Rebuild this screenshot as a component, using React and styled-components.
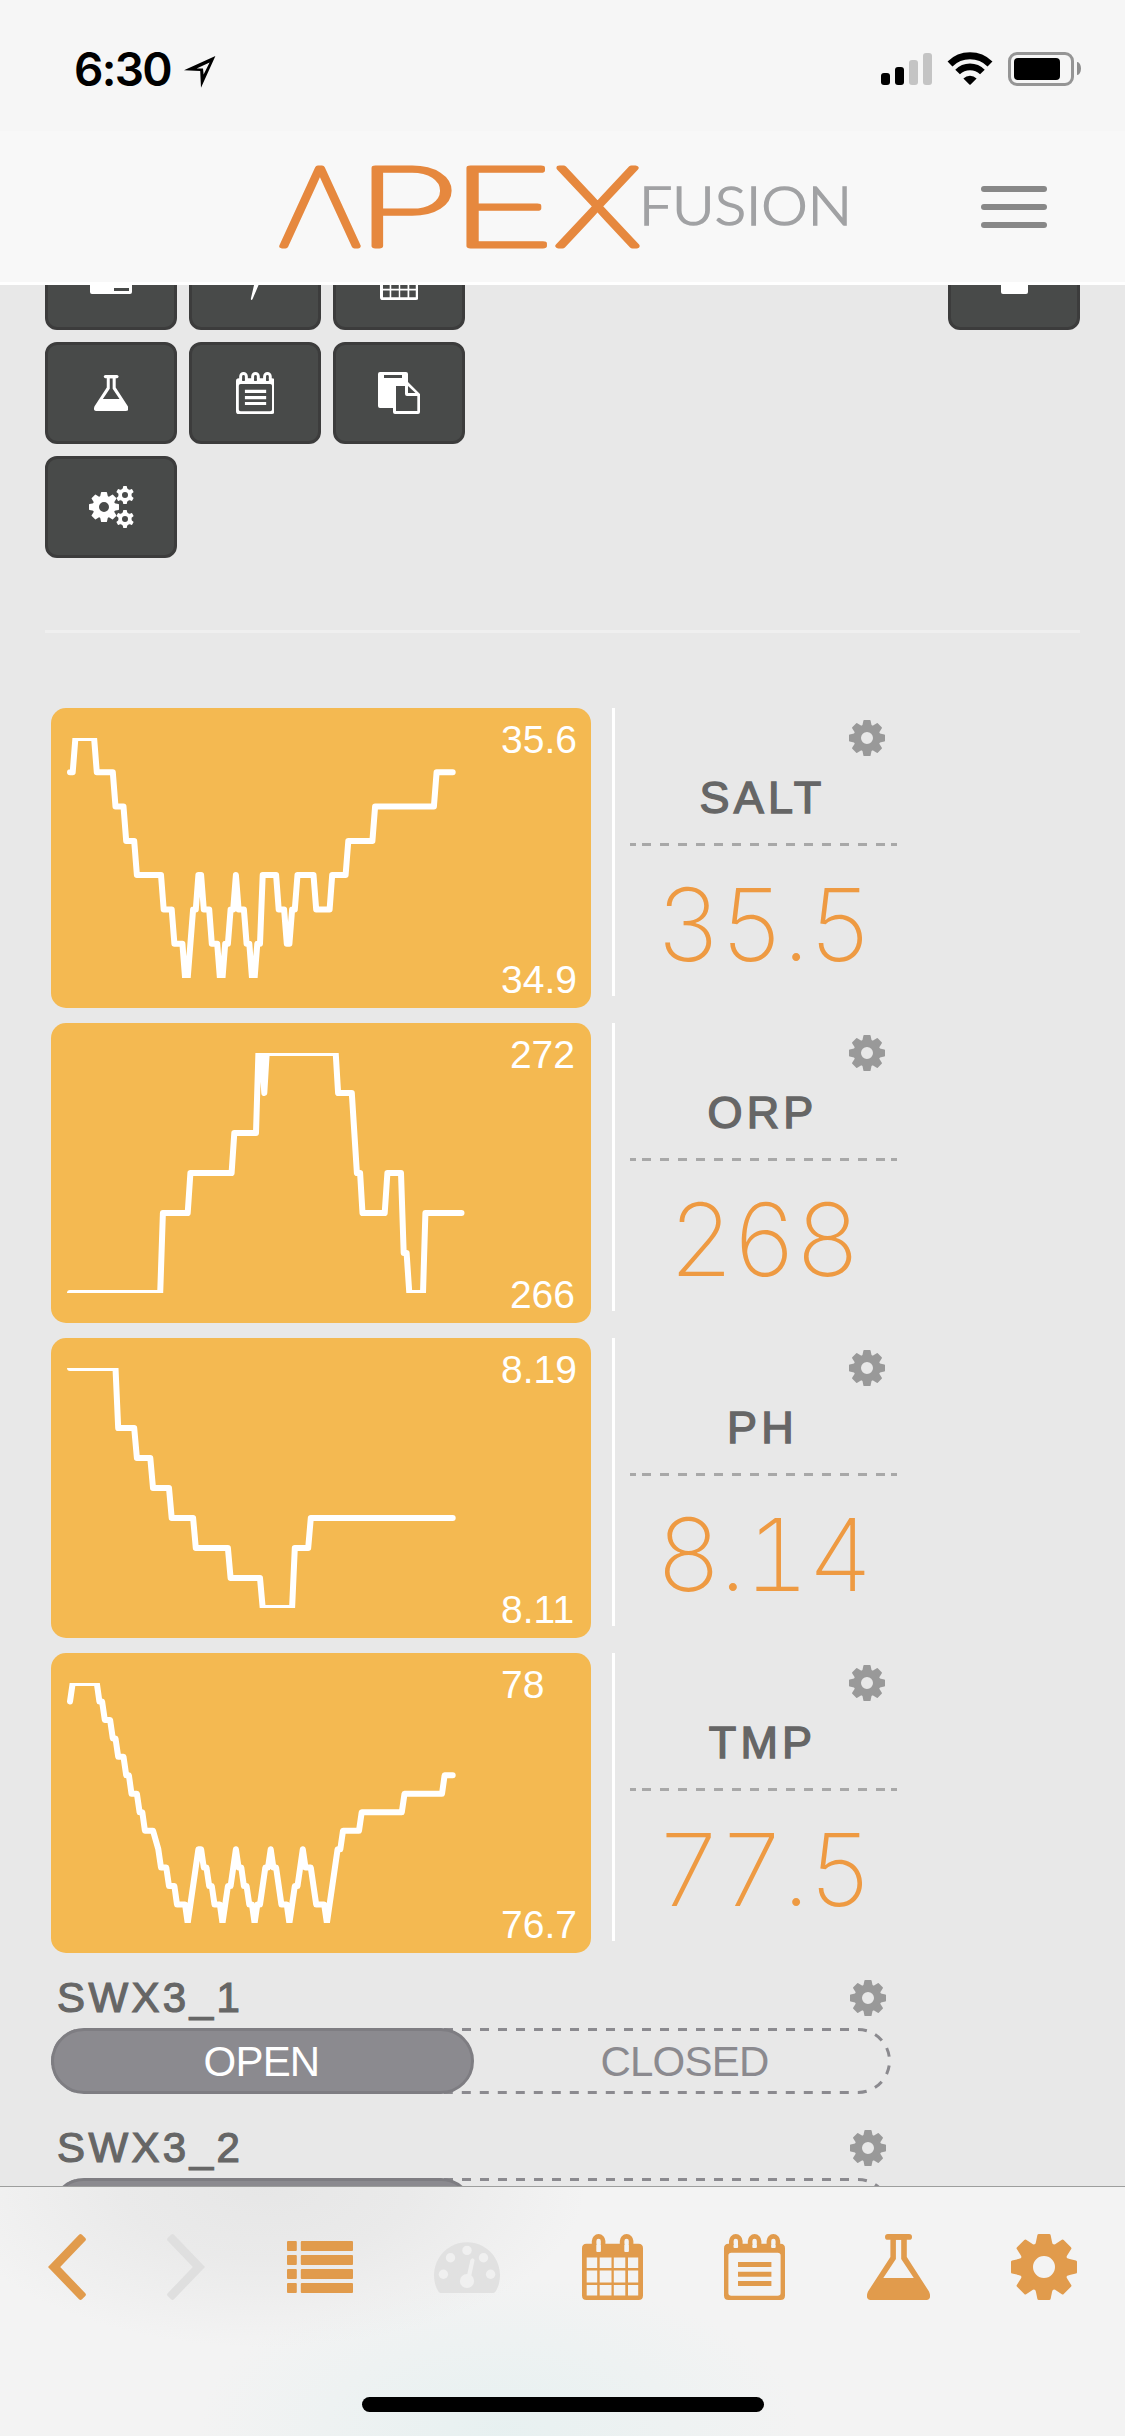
import React from 'react';
import styled, { createGlobalStyle } from 'styled-components';

const GlobalStyle = createGlobalStyle`
  * {
    box-sizing: border-box;
  }
  body {
    margin: 0;
    background: #e8e8e8;
    font-family: "Liberation Sans", Arial, sans-serif;
  }
`;

const Page = styled.div`
  width: 1125px;
  height: 2436px;
  display: flex;
  flex-direction: column;
  overflow: hidden;
  background: #e8e8e8;
`;

/* ---- status bar ---- */
const StatusBar = styled.div`
  height: 131px;
  flex-shrink: 0;
  display: flex;
  justify-content: space-between;
  padding: 0 44px 0 74px;
  background: #f6f6f6;
`;
const StatusGroup = styled.div`
  display: flex;
  align-items: flex-start;
`;
const Clock = styled.div`
  margin-top: 41px;
  width: 110px;
  font-family: Inter, sans-serif;
  font-size: 46px;
  font-weight: 600;
  line-height: 56px;
  letter-spacing: -1.7px;
`;
const LocationArrow = styled.svg`
  margin-top: 56px;
`;
const SignalBars = styled.div`
  display: flex;
  align-items: flex-end;
  gap: 5px;
  height: 32px;
  margin-top: 53px;
`;
const SignalBar = styled.div`
  width: 9px;
  height: ${({ $height }) => $height}px;
  border-radius: 3px;
  background: ${({ $on }) => ($on ? '#000' : '#c4c4c4')};
`;
const WifiIcon = styled.svg`
  margin: 52px 15px 0;
`;
const Battery = styled.div`
  width: 66px;
  height: 34px;
  margin-top: 52px;
  padding: 3px;
  border: 3px solid #959595;
  border-radius: 9px;
`;
const BatteryLevel = styled.div`
  width: 46px;
  height: 22px;
  border-radius: 4px;
  background: #000;
`;
const BatteryCap = styled.div`
  width: 4px;
  height: 13px;
  margin: 62px 0 0 3px;
  border-radius: 0 4px 4px 0 / 0 7px 7px 0;
  background: #8e8e8e;
`;

/* ---- header ---- */
const Header = styled.header`
  height: 154px;
  flex-shrink: 0;
  display: flex;
  justify-content: space-between;
  padding: 0 78px 0 270px;
  background: #f8f8f8;
  border-bottom: 3px solid #fff;
`;
const Logo = styled.svg`
  font-family: Inter, sans-serif;
`;
const MenuButton = styled.div`
  display: flex;
  flex-direction: column;
  gap: 12px;
  width: 66px;
  margin-top: 55px;
`;
const MenuLine = styled.div`
  height: 6px;
  border-radius: 3px;
  background: #888;
`;

/* ---- dashboard ---- */
const Main = styled.main`
  flex: 1;
  min-height: 0;
  overflow: hidden;
`;
const Toolbar = styled.div`
  display: flex;
  justify-content: space-between;
  align-items: flex-start;
  margin: -57px 45px 0;
`;
const ButtonGrid = styled.div`
  display: grid;
  grid-template-columns: repeat(3, 132px);
  gap: 12px;
`;
const ToolButton = styled.div`
  width: 132px;
  height: 102px;
  display: flex;
  align-items: center;
  justify-content: center;
  border: 3px solid #3c3c3c;
  border-radius: 12px;
  background: #484a49;
  color: #fff;
`;
const Divider = styled.div`
  height: 3px;
  margin: 72px 45px 75px;
  background: #efefef;
`;
const Probes = styled.div`
  display: flex;
  flex-direction: column;
  gap: 15px;
  width: 846px;
  margin-left: 51px;
`;
const ProbeRow = styled.div`
  display: flex;
  height: 300px;
`;
const ChartCard = styled.div`
  width: 540px;
  height: 300px;
  display: flex;
  justify-content: space-between;
  padding: 0 14px 0 0;
  border-radius: 15px;
  background: #f4b951;
`;
const ChartSvg = styled.svg`
  margin-top: 30px;
`;
const Range = styled.div`
  display: flex;
  flex-direction: column;
  justify-content: space-between;
  padding: 9px ${({ $inset }) => $inset}px 6px 0;
  color: #fff;
  font-size: 39px;
  line-height: 45px;
`;
const Reading = styled.div`
  width: 285px;
  height: 288px;
  display: flex;
  flex-direction: column;
  align-items: center;
  margin-left: 21px;
  padding: 12px 0 0 15px;
  border-left: 3px solid #fff;
`;
const GearSlot = styled.div`
  align-self: flex-end;
  display: flex;
  margin-right: 12px;
  color: #999;
`;
const ProbeName = styled.div`
  margin-top: 16px;
  margin-left: -2px;
  font-size: 45px;
  line-height: 52px;
  letter-spacing: 4.2px;
  color: #666;
  -webkit-text-stroke: 1.4px #666;
`;
const Dashes = styled.div`
  align-self: stretch;
  height: 3px;
  margin-top: 19px;
  padding: 0 6px;
  border: 0 solid #a8a8a8;
  border-width: 0 6px;
  background: repeating-linear-gradient(90deg, #a8a8a8 0 9px, transparent 9px 18px) content-box;
`;
const Value = styled.div`
  margin-top: 18px;
  font-family: Inter, sans-serif;
  font-size: 101px;
  font-weight: 200;
  font-variant-numeric: tabular-nums;
  line-height: 120px;
  letter-spacing: -2px;
  color: #ee9a42;
`;

/* ---- switches ---- */
const SwitchItem = styled.div`
  width: 840px;
  height: 150px;
  margin-left: 51px;
`;
const SwitchHead = styled.div`
  display: flex;
  justify-content: space-between;
  align-items: flex-start;
  height: 75px;
  padding: 27px 5px 0 6px;
  color: #999;
`;
const SwitchName = styled.div`
  margin-top: -6px;
  font-size: 42px;
  line-height: 48px;
  letter-spacing: 3.4px;
  color: #666;
  -webkit-text-stroke: 1.2px #666;
`;
const Track = styled.div`
  position: relative;
  display: flex;
  height: 66px;
  font-size: 42px;
  line-height: 67px;
  letter-spacing: -0.8px;
  text-align: center;
`;
const TrackOutline = styled.svg`
  position: absolute;
  left: 0;
  top: 0;
`;
const ActiveSide = styled.div`
  position: relative;
  width: 423px;
  padding-right: 2px;
  border: 3px solid #7e7d82;
  border-radius: 33px;
  background: #8b8a8f;
  color: #fff;
  line-height: 61px;
`;
const IdleSide = styled.div`
  flex: 1;
  padding-left: 4px;
  color: #8b8a8f;
`;

/* ---- bottom bar ---- */
const BottomBar = styled.nav`
  height: 250px;
  flex-shrink: 0;
  border-top: 1px solid #9d9e9d;
  background:
    radial-gradient(ellipse 320px 160px at 265px 0, rgba(229, 229, 229, 0.9), rgba(231, 231, 231, 0.75) 45%, rgba(243, 243, 243, 0)),
    radial-gradient(ellipse 300px 150px at 500px 240px, rgba(228, 240, 240, 0.8), rgba(243, 243, 243, 0)),
    #f3f3f3;
`;
const TabIcons = styled.div`
  display: flex;
  justify-content: space-between;
  align-items: center;
  height: 66px;
  margin: 47px 48px 97px;
  color: #e19b4c;
`;
const HomeIndicator = styled.div`
  width: 402px;
  height: 15px;
  margin: 0 auto;
  border-radius: 8px;
  background: #000;
`;

/* ---- icons ---- */
const teethAngles = (n) => Array.from({ length: n }, (_, i) => (360 / n) * i);

// gear of radius 18 centred on the origin
const GearShape = ({ teeth = 8 }) => (
  <g fill="currentColor">
    <circle r="9.7" fill="none" stroke="currentColor" strokeWidth="7.4" />
    {teethAngles(teeth).map((a) => (
      <path key={a} d="M-5 -12 Q-4.4 -13.2 -4.3 -14 L-3.6 -17.4 Q-3.5 -18 -2.8 -18 H2.8 Q3.5 -18 3.6 -17.4 L4.3 -14 Q4.4 -13.2 5 -12 Z" transform={`rotate(${a})`} />
    ))}
  </g>
);

const GearIcon = ({ size = 36 }) => (
  <svg width={size} height={size} viewBox="-18 -18 36 36"><GearShape /></svg>
);

const CogsIcon = () => (
  <svg width="45" height="42" viewBox="0 0 45 42">
    <g transform="translate(15 21) scale(0.833)"><GearShape /></g>
    <g transform="translate(36 9) scale(0.5)"><GearShape teeth={6} /></g>
    <g transform="translate(36 33) scale(0.5)"><GearShape teeth={6} /></g>
  </svg>
);

const FlaskIcon = ({ size = 66 }) => (
  <svg width={(size * 63) / 66} height={size} viewBox="0 0 63 66" fill="currentColor">
    <rect x="18" y="0" width="27" height="5.8" rx="2.9" />
    <path fillRule="evenodd" d="M23.4 4 V23 L1 57.5 Q-2.5 66 5 66 H58 Q65.5 66 62 57.5 L39.8 23 V4 Z M28.9 5.8 V25 L16.3 44 H46.8 L34.2 25 V5.8 Z" />
  </svg>
);

const Ring = ({ x }) => (
  <path d={`M${x - 4.5} 11 V7 A4.5 4.6 0 0 1 ${x + 4.5} 7 V11`} fill="none" stroke="currentColor" strokeWidth="4.6" />
);

const CalendarIcon = ({ size = 66 }) => (
  <svg width={(size * 61) / 66} height={size} viewBox="0 0 61 66" fill="currentColor">
    <Ring x={16.6} />
    <Ring x={44.6} />
    <path
      fillRule="evenodd"
      d="M4.5 9.7 H56.5 Q61 9.7 61 14.2 V61.5 Q61 66 56.5 66 H4.5 Q0 66 0 61.5 V14.2 Q0 9.7 4.5 9.7 Z
        M14.3 9.7 V17 Q14.3 18 15.3 18 H17.9 Q18.9 18 18.9 17 V9.7 Z
        M42.3 9.7 V17 Q42.3 18 43.3 18 H45.9 Q46.9 18 46.9 17 V9.7 Z
        M4.7 23.6 H15.2 V34 H4.7 Z M17.7 23.6 H29.5 V34 H17.7 Z M31.8 23.6 H43.3 V34 H31.8 Z M46 23.6 H56.2 V34 H46 Z
        M4.7 36.6 H15.2 V48.5 H4.7 Z M17.7 36.6 H29.5 V48.5 H17.7 Z M31.8 36.6 H43.3 V48.5 H31.8 Z M46 36.6 H56.2 V48.5 H46 Z
        M4.7 51 H15.2 V61.5 H4.7 Z M17.7 51 H29.5 V61.5 H17.7 Z M31.8 51 H43.3 V61.5 H31.8 Z M46 51 H56.2 V61.5 H46 Z"
    />
  </svg>
);

const NotesIcon = ({ size = 66 }) => (
  <svg width={(size * 61) / 66} height={size} viewBox="0 0 61 66" fill="currentColor">
    <Ring x={11.8} />
    <Ring x={30.6} />
    <Ring x={49.4} />
    <path
      fillRule="evenodd"
      d="M4.5 9.7 H56.5 Q61 9.7 61 14.2 V61.5 Q61 66 56.5 66 H4.5 Q0 66 0 61.5 V14.2 Q0 9.7 4.5 9.7 Z
        M9.5 9.7 V13 Q9.5 14 10.5 14 H13.1 Q14.1 14 14.1 13 V9.7 Z
        M28.3 9.7 V13 Q28.3 14 29.3 14 H31.9 Q32.9 14 32.9 13 V9.7 Z
        M47.1 9.7 V13 Q47.1 14 48.1 14 H50.7 Q51.7 14 51.7 13 V9.7 Z
        M7.3 18.8 Q4.4 18.8 4.4 21.6 V59 Q4.4 61.8 7.3 61.8 H53.7 Q56.6 61.8 56.6 59 V21.6 Q56.6 18.8 53.7 18.8 Z"
    />
    <path d="M14 28 H47.4 V33 H14 Z M14 37.8 H47.4 V42.8 H14 Z M14 47 H47.4 V52 H14 Z" />
  </svg>
);

const ListIcon = () => (
  <svg width="66" height="52" viewBox="0 0 66 52" fill="currentColor">
    {[0, 14, 28, 42].map((y) => (
      <g key={y}>
        <rect x="0" y={y} width="9.8" height="10" rx="1" />
        <rect x="13.8" y={y} width="52.2" height="10" rx="1" />
      </g>
    ))}
  </svg>
);

const GaugeIcon = () => (
  <svg width="66" height="52" viewBox="0 0 66 52">
    <path d="M6.6 52 Q4.8 52 3.8 49.6 A33 33 0 1 1 62.2 49.6 Q61.2 52 59.4 52 Z" fill="#e1e1e1" />
    <g fill="#f0f0f0">
      <circle cx="9.4" cy="33.3" r="4.7" />
      <circle cx="16.5" cy="16.7" r="4.7" />
      <circle cx="33" cy="9.4" r="4.7" />
      <circle cx="49.5" cy="16.7" r="4.7" />
      <circle cx="56.6" cy="33.3" r="4.7" />
      <circle cx="33" cy="40" r="7.1" />
      <path d="M32.6 36 L36.4 19 Q38.6 15.6 40.6 19 L37 36 Z" />
    </g>
  </svg>
);

const Chevron = ({ right, color = 'currentColor' }) => (
  <svg width="38" height="66" viewBox="0 0 38 66" fill={color}>
    <path
      d="M31 0.8 Q32.5 -0.8 34 0.8 L37.3 4 Q38.6 5.4 37.3 6.8 L12.2 33 L37.3 59.2 Q38.6 60.6 37.3 62 L34 65.2 Q32.5 66.8 31 65.2 L0 33 Z"
      transform={right ? 'matrix(-1 0 0 1 38 0)' : undefined}
    />
  </svg>
);

const PasteIcon = () => (
  <svg width="42" height="42" viewBox="0 0 42 42" fill="#fff">
    <path fillRule="evenodd" d="M2 0 H28 Q30 0 30 2 V14 H15 V36 H2 Q0 36 0 34 V2 Q0 0 2 0 Z M6 3 V6 H24 V3 Z" />
    <path fillRule="evenodd" d="M15 10 H30 L42 22 V40 Q42 42 40 42 H17 Q15 42 15 40 Z M18 12 V39 H39.3 V24 H29 Q27 24 27 22 V12 Z M30 14 V21 H37.5 Z" />
  </svg>
);

const CardIcon = () => (
  <svg width="42" height="30" viewBox="0 0 42 30" fill="#fff">
    <path fillRule="evenodd" d="M2 0 H40 Q42 0 42 2 V28 Q42 30 40 30 H2 Q0 30 0 28 V2 Q0 0 2 0 Z M24 24 V27 H39 V24 Z" />
  </svg>
);

const BoltIcon = () => (
  <svg width="24" height="42" viewBox="0 0 24 42" fill="#fff">
    <path d="M8 0 H18 L14 12 H22 L9.6 41 Q8.4 43 7.8 41 L12.4 21 H2 Z" />
  </svg>
);

const LockIcon = () => (
  <svg width="27" height="30" viewBox="0 0 27 30" fill="#fff">
    <rect width="27" height="30" rx="2" />
  </svg>
);

const SAMPLE_STEP = 2.676;

// points are [sample, value]; the line is cut off at the plot's own edges
const Chart = ({ min, max, points }) => (
  <ChartSvg width="420" height="240" viewBox="0 0 420 240">
    <polyline
      points={points.map(([t, v]) => `${(19 + t * SAMPLE_STEP).toFixed(1)},${(((max - v) / (max - min)) * 240).toFixed(1)}`).join(' ')}
      fill="none"
      stroke="#fff"
      strokeWidth="6"
      strokeLinecap="round"
      strokeLinejoin="round"
    />
  </ChartSvg>
);

const probes = [
  {
    name: 'SALT', value: '35.5', high: '35.6', low: '34.9', max: 35.6, min: 34.9, inset: 0,
    points: [
      [0, 35.5], [1, 35.5], [2, 35.6], [9, 35.6], [10, 35.5], [16, 35.5], [17, 35.4], [20, 35.4], [21, 35.3], [24, 35.3],
      [25, 35.2], [34, 35.2], [35, 35.1], [38, 35.1], [39, 35], [42, 35], [43, 34.9], [44, 34.9], [46, 35.1], [47, 35.1],
      [48, 35.2], [49, 35.2], [50, 35.1], [52, 35.1], [53, 35], [55, 35], [56, 34.9], [57, 34.9], [58, 35], [59, 35],
      [60, 35.1], [61, 35.1], [62, 35.2], [63, 35.1], [65, 35.1], [66, 35], [67, 35], [68, 34.9], [69, 34.9], [70, 35],
      [71, 35], [72, 35.2], [77, 35.2], [78, 35.1], [80, 35.1], [81, 35], [82, 35], [83, 35.1], [84, 35.1], [85, 35.2],
      [91, 35.2], [92, 35.1], [97, 35.1], [98, 35.2], [103, 35.2], [104, 35.3], [113, 35.3], [114, 35.4], [136, 35.4],
      [137, 35.5], [143, 35.5],
    ],
  },
  {
    name: 'ORP', value: '268', high: '272', low: '266', max: 272, min: 266, inset: 2,
    points: [
      [0, 266], [33.7, 266], [34.7, 268], [44, 268], [45, 269], [60.4, 269], [61.4, 270], [69.5, 270], [70.4, 272],
      [71.6, 272], [72.6, 271], [73.5, 272], [99.3, 272], [100.2, 271], [105.3, 271], [107.2, 269], [108.4, 269],
      [109.3, 268], [117.6, 268], [118.6, 269], [123.7, 269], [124.7, 267], [125.8, 267], [126.8, 266], [131.9, 266],
      [132.8, 268], [146.3, 268],
    ],
  },
  {
    name: 'PH', value: '8.14', high: '8.19', low: '8.11', max: 8.19, min: 8.11, inset: 0,
    points: [
      [0, 8.19], [17, 8.19], [18, 8.17], [24, 8.17], [25, 8.16], [30, 8.16], [31, 8.15], [37, 8.15], [38, 8.14],
      [46, 8.14], [47, 8.13], [59, 8.13], [60, 8.12], [71, 8.12], [72, 8.11], [83, 8.11], [84, 8.13], [89, 8.13],
      [90, 8.14], [143, 8.14],
    ],
  },
  {
    name: 'TMP', value: '77.5', high: '78', low: '76.7', max: 78, min: 76.7, inset: 0,
    points: [
      [0, 77.9], [1, 78], [10, 78], [11, 77.9], [12, 77.9], [13, 77.8], [15, 77.8], [16, 77.7], [17, 77.7], [18, 77.6],
      [20, 77.6], [21, 77.5], [22, 77.5], [23, 77.4], [25, 77.4], [26, 77.3], [27, 77.3], [28, 77.2], [31, 77.2],
      [33, 77.1], [34, 77], [36, 77], [37, 76.9], [39, 76.9], [40, 76.8], [43, 76.8], [44, 76.7], [48, 77.1], [49, 77.1],
      [50, 77], [51, 77], [52, 76.9], [53, 76.9], [54, 76.8], [56, 76.8], [57, 76.7], [59, 76.9], [60, 76.9], [62, 77.1],
      [63, 77], [64, 77], [65, 76.9], [66, 76.9], [67, 76.8], [68, 76.8], [69, 76.7], [70, 76.8], [71, 76.8], [73, 77],
      [74, 77], [75, 77.1], [76, 77], [77, 77], [79, 76.8], [81, 76.8], [82, 76.7], [84, 76.9], [85, 76.9], [87, 77.1],
      [88, 77], [90, 77], [92, 76.8], [95, 76.8], [96, 76.7], [100, 77.1], [101, 77.1], [102, 77.2], [108, 77.2],
      [109, 77.3], [124, 77.3], [125, 77.4], [139, 77.4], [140, 77.5], [143, 77.5],
    ],
  },
];

const switches = ['SWX3_1', 'SWX3_2'];

const App = () => (
  <Page>
    <GlobalStyle />
    <StatusBar>
      <StatusGroup>
        <Clock>6:30</Clock>
        <LocationArrow width="32" height="32" viewBox="0 0 32 32">
          <path fillRule="evenodd" d="M31.4 0 L17 31.8 L16.2 15 L0 14.2 Z M25.6 6.4 L12.6 12.4 L19 12.6 L19.6 18.6 Z" />
        </LocationArrow>
      </StatusGroup>
      <StatusGroup>
        <SignalBars>
          <SignalBar $height={12} $on />
          <SignalBar $height={18} $on />
          <SignalBar $height={25} />
          <SignalBar $height={32} />
        </SignalBars>
        <WifiIcon width="46" height="33" viewBox="0 0 46 33">
          <path d="M3 12 A28.5 28.5 0 0 1 43 12" fill="none" stroke="#000" strokeWidth="7" />
          <path d="M10.6 20 A17.5 17.5 0 0 1 35.4 20" fill="none" stroke="#000" strokeWidth="6.6" />
          <path d="M16.4 26.4 A9.6 9.6 0 0 1 29.6 26.4 L23.6 32.4 Q23 33 22.4 32.4 Z" />
        </WifiIcon>
        <Battery><BatteryLevel /></Battery>
        <BatteryCap />
      </StatusGroup>
    </StatusBar>

    <Header>
      <Logo width="600" height="151" viewBox="0 0 600 151">
        <g fontSize="107" fontWeight="100" fill="#e6883e" stroke="#e6883e" strokeWidth="4.8" strokeLinejoin="round">
          <text x="8" y="114.5" textLength="84" lengthAdjust="spacingAndGlyphs">Λ</text>
          <text x="86" y="114.5" textLength="104" lengthAdjust="spacingAndGlyphs">P</text>
          <text x="180" y="114.5" textLength="106" lengthAdjust="spacingAndGlyphs">E</text>
          <text x="284" y="114.5" textLength="87" lengthAdjust="spacingAndGlyphs">X</text>
        </g>
        <text x="369" y="94" fontFamily="Lato, sans-serif" fontSize="53" fontWeight="300" fill="#a1a2a4" stroke="#a1a2a4" strokeWidth="1.6" textLength="213" lengthAdjust="spacingAndGlyphs">FUSION</text>
      </Logo>
      <MenuButton>
        <MenuLine />
        <MenuLine />
        <MenuLine />
      </MenuButton>
    </Header>

    <Main>
      <Toolbar>
        <ButtonGrid>
          <ToolButton><CardIcon /></ToolButton>
          <ToolButton><BoltIcon /></ToolButton>
          <ToolButton><CalendarIcon size={42} /></ToolButton>
          <ToolButton><FlaskIcon size={36} /></ToolButton>
          <ToolButton><NotesIcon size={42} /></ToolButton>
          <ToolButton><PasteIcon /></ToolButton>
          <ToolButton><CogsIcon /></ToolButton>
        </ButtonGrid>
        <ToolButton><LockIcon /></ToolButton>
      </Toolbar>
      <Divider />
      <Probes>
        {probes.map((p) => (
          <ProbeRow key={p.name}>
            <ChartCard>
              <Chart min={p.min} max={p.max} points={p.points} />
              <Range $inset={p.inset}>
                <span>{p.high}</span>
                <span>{p.low}</span>
              </Range>
            </ChartCard>
            <Reading>
              <GearSlot><GearIcon /></GearSlot>
              <ProbeName>{p.name}</ProbeName>
              <Dashes />
              <Value>{p.value}</Value>
            </Reading>
          </ProbeRow>
        ))}
      </Probes>
      {switches.map((name) => (
        <SwitchItem key={name}>
          <SwitchHead>
            <SwitchName>{name}</SwitchName>
            <GearIcon />
          </SwitchHead>
          <Track>
            <TrackOutline width="840" height="66">
              <rect x="1.5" y="1.5" width="837" height="63" rx="31.5" fill="none" stroke="#8b8a8f" strokeWidth="3" strokeDasharray="9 9" />
            </TrackOutline>
            <ActiveSide>OPEN</ActiveSide>
            <IdleSide>CLOSED</IdleSide>
          </Track>
        </SwitchItem>
      ))}
    </Main>

    <BottomBar>
      <TabIcons>
        <Chevron />
        <Chevron right color="#dfdfdf" />
        <ListIcon />
        <GaugeIcon />
        <CalendarIcon />
        <NotesIcon />
        <FlaskIcon />
        <GearIcon size={66} />
      </TabIcons>
      <HomeIndicator />
    </BottomBar>
  </Page>
);

export default App;
